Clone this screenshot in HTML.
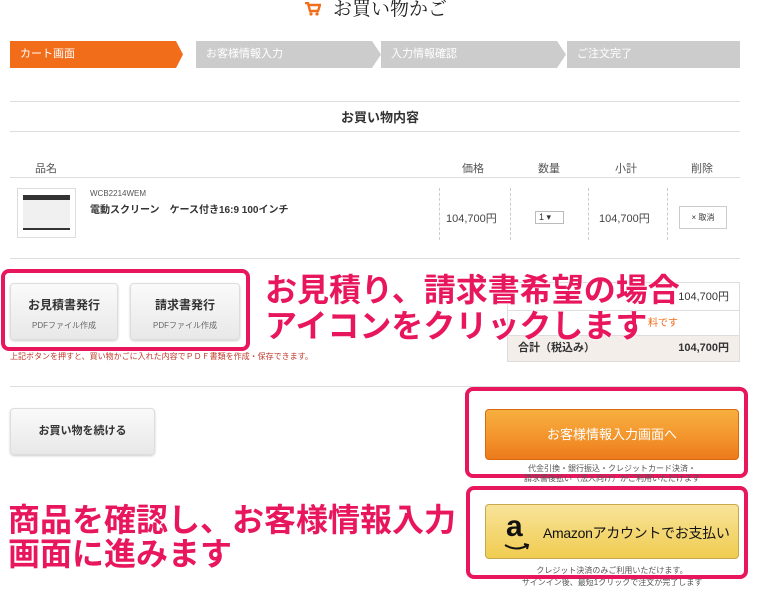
<!DOCTYPE html>
<html><head><meta charset="utf-8"><style>
*{margin:0;padding:0;box-sizing:border-box}
body{width:760px;height:600px;overflow:hidden;background:#fff;position:relative;font-family:"Liberation Sans","Noto Sans CJK JP",sans-serif;color:#333}
.a{position:absolute}
.step{position:absolute;top:41px;height:27px;color:#fff;font-size:11px;line-height:27px;padding-left:10px}
.hr{position:absolute;left:10px;width:730px;height:1px;background:#ddd}
.btn{position:absolute;border:1px solid #ddd;border-radius:4px;background:linear-gradient(#fafafa,#e8e8e8);box-shadow:0 1px 2px rgba(0,0,0,.2);text-align:center}
.pink{position:absolute;border:4px solid #e8175d;border-radius:8px}
.big{position:absolute;color:#e8175d;font-weight:bold;font-size:32px;line-height:36px;text-shadow:0 0 2px #fff,0 0 2px #fff;white-space:nowrap}
.vd{position:absolute;top:188px;height:52px;border-left:1px dashed #ccc}
</style></head><body>
<svg class="a" style="left:305px;top:2px" width="16" height="14" viewBox="0 0 16 14"><path d="M0 1h3l2 8h8l2-6H4" fill="none" stroke="#f26d1a" stroke-width="2.4"/><circle cx="6" cy="12" r="1.6" fill="#f26d1a"/><circle cx="12" cy="12" r="1.6" fill="#f26d1a"/></svg>
<div class="a" style="left:333px;top:-6px;font-size:19px;font-family:'Liberation Serif','Noto Serif CJK SC',serif;color:#222">お買い物かご</div>
<div class="step" style="left:10px;width:173px;background:#f26d1a;clip-path:polygon(0 0,166px 0,173px 50%,166px 100%,0 100%)">カート画面</div>
<div class="step" style="left:196px;width:185px;background:#ccc;clip-path:polygon(0 0,176px 0,185px 50%,176px 100%,0 100%)">お客様情報入力</div>
<div class="step" style="left:381px;width:185px;background:#ccc;clip-path:polygon(0 0,176px 0,185px 50%,176px 100%,0 100%)">入力情報確認</div>
<div class="step" style="left:567px;width:173px;background:#ccc">ご注文完了</div>
<div class="hr" style="top:101px"></div>
<div class="a" style="left:0;width:760px;top:107px;text-align:center;font-size:13px;font-weight:bold">お買い物内容</div>
<div class="hr" style="top:131px"></div>
<div class="a" style="top:160px;left:35px;font-size:11px;color:#555">品名</div>
<div class="a" style="top:160px;left:462px;font-size:11px;color:#555">価格</div>
<div class="a" style="top:160px;left:538px;font-size:11px;color:#555">数量</div>
<div class="a" style="top:160px;left:615px;font-size:11px;color:#555">小計</div>
<div class="a" style="top:160px;left:691px;font-size:11px;color:#555">削除</div>
<div class="hr" style="top:177px"></div>
<div class="a" style="left:17px;top:188px;width:59px;height:50px;border:1px solid #ddd;background:#fff"><div class="a" style="left:5px;top:6px;width:47px;height:5px;background:#333"></div><div class="a" style="left:5px;top:11px;width:47px;height:30px;background:#f0f0f0;border-bottom:2px solid #333"></div></div>
<div class="a" style="left:90px;top:189px;font-size:8px;color:#555">WCB2214WEM</div>
<div class="a" style="left:90px;top:201px;font-size:10px;font-weight:bold">電動スクリーン　ケース付き16:9 100インチ</div>
<div class="vd" style="left:439px"></div><div class="vd" style="left:510px"></div><div class="vd" style="left:588px"></div><div class="vd" style="left:667px"></div>
<div class="a" style="left:446px;top:210px;font-size:11px;color:#444">104,700円</div>
<div class="a" style="left:535px;top:211px;width:29px;height:13px;border:1px solid #bbb;font-size:9px;line-height:11px;padding-left:3px">1 ▾</div>
<div class="a" style="left:599px;top:210px;font-size:11px;color:#444">104,700円</div>
<div class="a" style="left:679px;top:206px;width:48px;height:23px;border:1px solid #ccc;font-size:8px;line-height:21px;text-align:center">× 取消</div>
<div class="hr" style="top:258px"></div>
<div class="btn" style="left:10px;top:283px;width:108px;height:57px"><div style="font-size:12px;font-weight:bold;margin-top:12px">お見積書発行</div><div style="font-size:8px;color:#666;margin-top:7px">PDFファイル作成</div></div>
<div class="btn" style="left:130px;top:283px;width:110px;height:57px"><div style="font-size:12px;font-weight:bold;margin-top:12px">請求書発行</div><div style="font-size:8px;color:#666;margin-top:7px">PDFファイル作成</div></div>
<div class="pink" style="left:1px;top:269px;width:249px;height:82px"></div>
<div class="a" style="left:10px;top:351px;font-size:8px;color:#c0392b">上記ボタンを押すと、買い物かごに入れた内容でＰＤＦ書類を作成・保存できます。</div>
<div class="a" style="left:507px;top:282px;width:233px;height:80px;border:1px solid #ddd"><div style="height:28px;border-bottom:1px solid #ddd;text-align:right;padding-right:10px;font-size:11px;line-height:28px">104,700円</div><div style="height:25px;border-bottom:1px solid #ddd;font-size:10px;color:#f26d1a;line-height:25px;padding-left:140px">料です</div><div style="height:25px;background:#f4eeeb;font-size:11px;font-weight:bold;line-height:25px;padding:0 10px;display:flex;justify-content:space-between"><span>合計（税込み）</span><span>104,700円</span></div></div>
<div class="big" style="left:265px;top:272px">お見積り、請求書希望の場合</div>
<div class="big" style="left:265px;top:308px">アイコンをクリックします</div>
<div class="hr" style="top:386px"></div>
<div class="btn" style="left:10px;top:408px;width:145px;height:47px;font-size:11px;font-weight:bold;line-height:45px">お買い物を続ける</div>
<div class="a" style="left:485px;top:409px;width:254px;height:51px;border-radius:4px;border:1px solid #d96a10;background:linear-gradient(#f7b040,#f3922a 60%,#ec7a1c);color:#fff;text-align:center;font-size:13px;line-height:49px">お客様情報入力画面へ</div>
<div class="pink" style="left:465px;top:387px;width:283px;height:91px"></div>
<div class="a" style="left:485px;top:464px;width:254px;text-align:center;font-size:8px;color:#555;line-height:10px">代金引換・銀行振込・クレジットカード決済・<br>請求書後払い（法人向け）がご利用いただけます</div>
<div class="pink" style="left:466px;top:486px;width:282px;height:93px;background:transparent"></div>
<div class="a" style="left:485px;top:504px;width:254px;height:55px;border-radius:4px;border:1px solid #c8a84a;background:linear-gradient(#f8e39a,#f0cc50);"><div class="a" style="left:20px;top:6px;font-size:30px;font-weight:bold;color:#111;line-height:32px">a</div><svg class="a" style="left:18px;top:38px" width="26" height="9"><path d="M1 2q12 7 23 0M20 1l4 1-1 4" fill="none" stroke="#111" stroke-width="2"/></svg><div class="a" style="left:57px;top:18px;font-size:14px;color:#111;white-space:nowrap;letter-spacing:-0.3px">Amazonアカウントでお支払い</div></div>
<div class="a" style="left:485px;top:565px;width:254px;text-align:center;font-size:8px;color:#555;line-height:12px">クレジット決済のみご利用いただけます。<br>サインイン後、最短1クリックで注文が完了します</div>
<div class="big" style="left:8px;top:502px">商品を確認し、お客様情報入力</div>
<div class="big" style="left:8px;top:536px">画面に進みます</div>
</body></html>
